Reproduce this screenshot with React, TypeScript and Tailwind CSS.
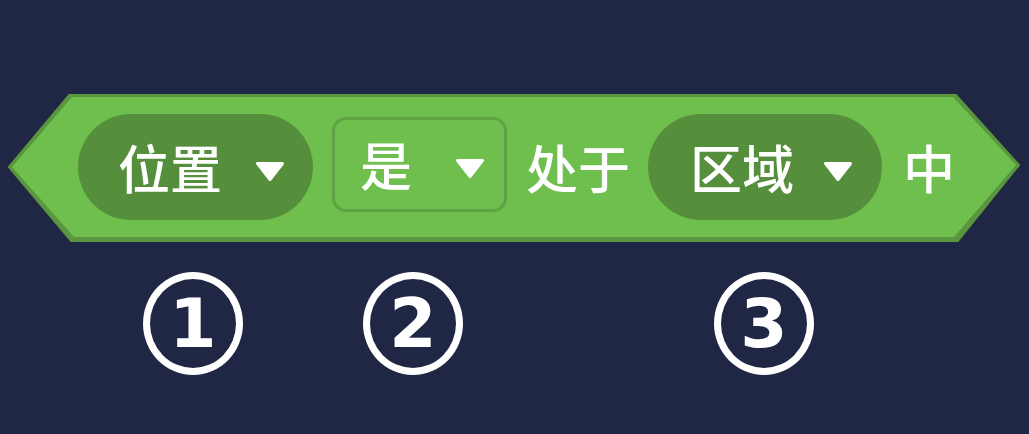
const PILL = 'flex items-center h-[106px] rounded-full bg-[#568f3b]'
const CJK = { fontFamily: '"Noto Sans CJK SC", "Noto Sans", sans-serif' }

function Caret() {
  return (
    <svg className="mt-[9px] shrink-0" width="30" height="21" viewBox="0 0 30 21" fill="none">
      <path d="M2.5 2.5 H27.5 L15 18.5 Z" fill="#ffffff" stroke="#ffffff" strokeWidth="3" strokeLinejoin="round" />
    </svg>
  )
}

function Label({ text, className = '' }: { text: string; className?: string }) {
  return (
    <span className={`text-white text-[52px] leading-none font-medium ${className}`} style={CJK}>
      {text}
    </span>
  )
}

function Badge({ n, className = '' }: { n: string; className?: string }) {
  return (
    <div
      className={`w-[100px] h-[103px] shrink-0 flex items-center justify-center rounded-[50%] border-[7px] border-white ${className}`}
    >
      <span className="text-white text-[68px] leading-none font-bold" style={{ fontFamily: '"DejaVu Sans", sans-serif' }}>
        {n}
      </span>
    </div>
  )
}

export default function App() {
  return (
    <div className="w-[1029px] h-[434px] bg-[#1f2744] overflow-hidden pt-[94px]">
      <div className="relative ml-[8px] w-[1012px] h-[148px]">
        <svg className="absolute inset-0" width="1012" height="148" viewBox="0 0 1012 148">
          <polygon
            points="1,73 62,0 947,0 1011,71 949,148 64,148"
            fill="#5a953f"
            stroke="#5a953f"
            strokeWidth="2"
            strokeLinejoin="round"
          />
          <polygon points="4,73 64,3 945,3 1008,71 946,143 66,143" fill="#6fbf4e" />
        </svg>

        <div className="relative flex items-center h-full pb-[2px]">
          <div className={`${PILL} ml-[70px] w-[235px] pl-[40px]`}>
            <Label text="位置" />
            <span className="ml-[33px]">
              <Caret />
            </span>
          </div>

          <div className="ml-[19px] flex items-center w-[175px] h-[95px] -mt-[6px] pl-[25px] rounded-[14px] border-[3px] border-[#5ea445] bg-[#6fbf4e]">
            <Label text="是" />
            <span className="ml-[43px]">
              <Caret />
            </span>
          </div>

          <Label text="处于" className="ml-[19px]" />

          <div className={`${PILL} ml-[18px] w-[234px] pl-[42px]`}>
            <Label text="区域" />
            <span className="ml-[29px]">
              <Caret />
            </span>
          </div>

          <Label text="中" className="ml-[21px]" />
        </div>
      </div>

      <div className="flex mt-[30px]">
        <Badge n="1" className="ml-[143px]" />
        <Badge n="2" className="ml-[120px]" />
        <Badge n="3" className="ml-[251px]" />
      </div>
    </div>
  )
}
